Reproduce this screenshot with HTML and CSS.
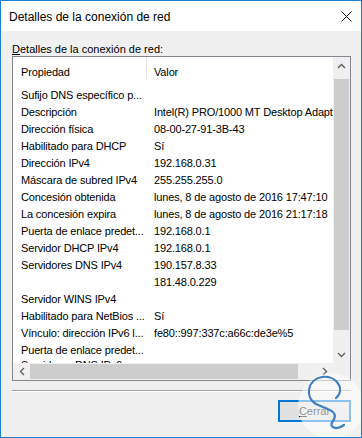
FILE: index.html
```html
<!DOCTYPE html>
<html lang="es">
<head>
    <meta charset="UTF-8">
    <meta name="viewport" content="width=device-width, initial-scale=1.0">
    <title>Detalles de la conexión de red</title>
    <link rel="stylesheet" href="styles.css">
</head>
<body>
    <div class="ventana">
        <div class="barraTitulo">
            <span class="titulo">Detalles de la conexión de red</span>
            <svg class="cerrarX" width="11" height="11" viewBox="0 0 11 11">
                <path d="M0.5 0.5 L10.5 10.5 M10.5 0.5 L0.5 10.5" stroke="#111" stroke-width="1" fill="none"/>
            </svg>
        </div>

        <div class="contenido">
            <p class="etiqueta"><u>D</u>etalles de la conexión de red:</p>

            <div class="lista">
                <div class="listaArea">
                    <div class="cabecera">
                        <span class="colProp">Propiedad</span>
                        <span class="colValor">Valor</span>
                    </div>
                    <div class="filas">
                        <div class="fila"><span>Sufijo DNS específico p...</span><span></span></div>
                        <div class="fila"><span>Descripción</span><span>Intel(R) PRO/1000 MT Desktop Adapter</span></div>
                        <div class="fila"><span>Dirección física</span><span>08-00-27-91-3B-43</span></div>
                        <div class="fila"><span>Habilitado para DHCP</span><span>Sí</span></div>
                        <div class="fila"><span>Dirección IPv4</span><span>192.168.0.31</span></div>
                        <div class="fila"><span>Máscara de subred IPv4</span><span>255.255.255.0</span></div>
                        <div class="fila"><span>Concesión obtenida</span><span>lunes, 8 de agosto de 2016 17:47:10</span></div>
                        <div class="fila"><span>La concesión expira</span><span>lunes, 8 de agosto de 2016 21:17:18</span></div>
                        <div class="fila"><span>Puerta de enlace predet...</span><span>192.168.0.1</span></div>
                        <div class="fila"><span>Servidor DHCP IPv4</span><span>192.168.0.1</span></div>
                        <div class="fila"><span>Servidores DNS IPv4</span><span>190.157.8.33</span></div>
                        <div class="fila"><span></span><span>181.48.0.229</span></div>
                        <div class="fila"><span>Servidor WINS IPv4</span><span></span></div>
                        <div class="fila"><span>Habilitado para NetBios ...</span><span>Sí</span></div>
                        <div class="fila"><span>Vínculo: dirección IPv6 l...</span><span>fe80::997:337c:a66c:de3e%5</span></div>
                        <div class="fila"><span>Puerta de enlace predet...</span><span></span></div>
                        <div class="fila ultima"><span>Servidores DNS IPv6</span><span></span></div>
                    </div>
                </div>

                <div class="scrollV">
                    <div class="flecha">
                        <svg width="9" height="6" viewBox="0 0 9 6"><path d="M1 5 L4.5 1.5 L8 5" stroke="#606060" stroke-width="1.4" fill="none"/></svg>
                    </div>
                    <div class="pistaV"><div class="pulgarV"></div></div>
                    <div class="flecha">
                        <svg width="9" height="6" viewBox="0 0 9 6"><path d="M1 1 L4.5 4.5 L8 1" stroke="#606060" stroke-width="1.4" fill="none"/></svg>
                    </div>
                </div>

                <div class="scrollH">
                    <div class="flecha">
                        <svg width="6" height="9" viewBox="0 0 6 9"><path d="M5 1 L1.5 4.5 L5 8" stroke="#606060" stroke-width="1.4" fill="none"/></svg>
                    </div>
                    <div class="pistaH"><div class="pulgarH"></div></div>
                    <div class="flecha">
                        <svg width="6" height="9" viewBox="0 0 6 9"><path d="M1 1 L4.5 4.5 L1 8" stroke="#606060" stroke-width="1.4" fill="none"/></svg>
                    </div>
                </div>

                <div class="esquina"></div>
            </div>

            <div class="separador"></div>

            <div class="botones">
                <button class="botonCerrar"><u>C</u>errar</button>
            </div>
        </div>

        <!-- marca de agua -->
        <svg class="marcaAgua" width="70" height="70" viewBox="0 0 70 70">
            <circle cx="35" cy="35" r="33" fill="rgba(255,255,255,0.55)"/>
            <path d="M40 27 C50 18 40 4 26 6 C12 8 8 26 20 33 C30 38 44 40 37 50 C32 56 40 60 48 54"
                  stroke="#3f7fc2" stroke-width="2.2" fill="none" stroke-linecap="round"/>
        </svg>
    </div>
</body>
</html>
```

FILE: styles.css
```css
body {
    margin: 0;
    padding: 0;
    font-family: "Liberation Sans", Arial, sans-serif;
    font-size: 11px;
    color: #000;
    background: #f0f0f0;
}

.ventana {
    position: relative;
    width: 362px;
    height: 438px;
    box-sizing: border-box;
    border: 1px solid #1c7fd4;
    background: #f0f0f0;
    display: flex;
    flex-direction: column;
    overflow: hidden;
}

.barraTitulo {
    height: 30px;
    background: #fff;
    display: flex;
    align-items: center;
    justify-content: space-between;
    padding: 0 9px 0 8px;
}

.titulo {
    font-size: 12px;
    padding-top: 1px;
}

.cerrarX {
    margin-top: 1px;
}

.contenido {
    padding: 0 10px 0 11px;
}

.etiqueta {
    margin: 11px 0 0 0;
    line-height: 14px;
}

.lista {
    margin-top: 0;
    height: 325px;
    box-sizing: border-box;
    border: 1px solid #828790;
    background: #fff;
    display: grid;
    grid-template-columns: 320px 17px;
    grid-template-rows: 306px 17px;
}

.listaArea {
    overflow: hidden;
    white-space: nowrap;
    letter-spacing: -0.15px;
}

.cabecera {
    display: flex;
    height: 22px;
    margin-bottom: 8px;
}

.cabecera span {
    line-height: 14px;
    padding-top: 8px;
}

.colProp {
    width: 125px;
    padding-left: 8px;
    border-right: 1px solid #e5e5e5;
}

.colValor {
    padding-left: 7px;
}

.fila {
    display: grid;
    grid-template-columns: 134px 1fr;
    height: 17px;
    line-height: 17px;
}

.fila.ultima {
    line-height: 13px;
}

.fila span:first-child {
    padding-left: 8px;
    overflow: hidden;
}

.fila span:last-child {
    padding-left: 7px;
    overflow: hidden;
}

.scrollV {
    background: #f0f0f0;
    display: flex;
    flex-direction: column;
}

.scrollH {
    background: #f0f0f0;
    display: flex;
}

.flecha {
    width: 17px;
    height: 17px;
    display: flex;
    align-items: center;
    justify-content: center;
    flex-shrink: 0;
}

.pistaV {
    flex: 1;
    padding: 5px 1px 16px 1px;
    display: flex;
}

.pulgarV {
    flex: 1;
    background: #cdcdcd;
}

.pistaH {
    flex: 1;
    padding: 1px 18px 1px 0;
    display: flex;
}

.pulgarH {
    flex: 1;
    background: #cdcdcd;
}

.esquina {
    background: #f0f0f0;
}

.separador {
    margin-top: 9px;
    height: 1px;
    background: #a0a0a0;
    border-bottom: 1px solid #fff;
}

.botones {
    display: flex;
    justify-content: flex-end;
    margin-top: 8px;
}

.botonCerrar {
    width: 73px;
    height: 22px;
    margin-right: 0;
    font-family: "Liberation Sans", Arial, sans-serif;
    font-size: 11px;
    color: #000;
    background: #e1e1e1;
    border: 1px solid #0078d7;
    box-shadow: inset 0 0 0 1px #0078d7;
    padding: 0;
}

.marcaAgua {
    position: absolute;
    left: 295px;
    top: 370px;
}
```
